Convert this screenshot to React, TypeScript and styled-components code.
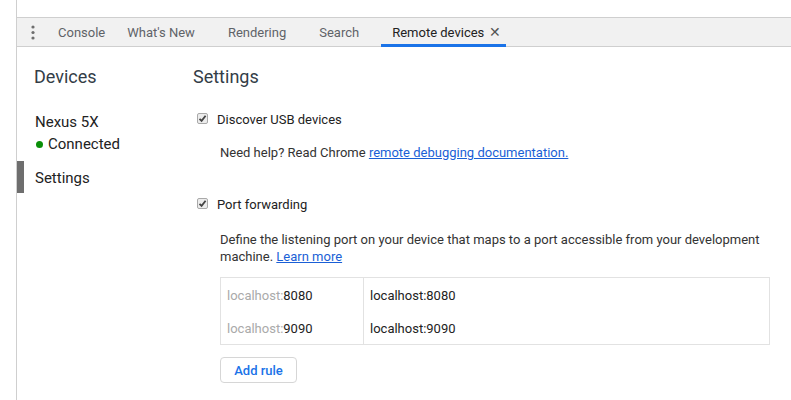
import React from "react";
import styled, { createGlobalStyle } from "styled-components";

const Global = createGlobalStyle`
  html, body { margin: 0; padding: 0; background: #fff; }
  body { font-family: Roboto, "Noto Sans", Arial, sans-serif; color: #333; }
  * { box-sizing: border-box; }
`;

const Page = styled.div`
  padding-left: 16px;
  height: 400px;
  overflow: hidden;
`;

const Frame = styled.div`
  border-left: 1px solid #cfcfcf;
  height: 400px;
  display: flex;
  flex-direction: column;
`;

const TopSpace = styled.div`
  height: 17px;
  flex: none;
`;

const TabBar = styled.div`
  flex: none;
  height: 30px;
  border-top: 1px solid #cfcfcf;
  background: #f1f1f1;
  box-shadow: inset 0 -1px 0 #cfcfcf;
  display: flex;
  align-items: stretch;
  padding-left: 11px;
`;

const MenuButton = styled.div`
  width: 19px;
  display: flex;
  align-items: center;
  justify-content: flex-start;
  padding-left: 3px;
`;

const Tab = styled.div<{ $active?: boolean; $closeable?: boolean }>`
  display: flex;
  align-items: center;
  padding: 0 ${(p) => (p.$closeable ? 7 : 11)}px 0 11px;
  font-size: 13px;
  color: ${(p) => (p.$active ? "#222" : "#5f6368")};
  box-shadow: ${(p) => (p.$active ? "inset 0 -3px 0 #1a73e8" : "none")};
  white-space: nowrap;
  padding-bottom: 1px;
`;

const CloseSlot = styled.span<{ $visible?: boolean }>`
  width: 8px;
  margin-left: 7px;
  font-size: 14px;
  color: #555;
  visibility: ${(p) => (p.$visible ? "visible" : "hidden")};
  display: flex;
  align-items: center;
  justify-content: center;
`;

const Body = styled.div`
  flex: 1;
  display: flex;
`;

const Sidebar = styled.div`
  width: 176px;
  flex: none;
  padding-top: 19px;
`;

const SideTitle = styled.div`
  font-size: 18px;
  color: #333d47;
  padding-left: 17px;
  height: 21px;
  line-height: 21px;
  margin-bottom: 24px;
`;

const DeviceBlock = styled.div`
  padding-left: 18px;
  font-size: 15px;
  color: #222;
  line-height: 22px;
`;

const Status = styled.div`
  display: flex;
  align-items: center;
  margin-left: 1px;
`;

const Dot = styled.span`
  width: 7px;
  height: 7px;
  border-radius: 50%;
  background: #0a8f08;
  margin-right: 5px;
  margin-top: 1px;
`;

const SideItem = styled.div<{ $selected?: boolean }>`
  margin-top: 6px;
  height: 32px;
  display: flex;
  align-items: center;
  font-size: 15px;
  color: #222;
  border-left: 7px solid ${(p) => (p.$selected ? "#6e6e6e" : "transparent")};
  padding-left: 11px;
  padding-top: 1px;
`;

const Main = styled.div`
  flex: 1;
  padding-top: 19px;
  padding-right: 21px;
`;

const Title = styled.div`
  font-size: 18px;
  color: #333d47;
  height: 21px;
  line-height: 21px;
  margin-bottom: 23px;
`;

const CheckRow = styled.label`
  display: flex;
  align-items: center;
  font-size: 13px;
  color: #222;
  height: 18px;
  padding-left: 4px;
`;

const CheckBox = styled.span`
  width: 11px;
  height: 11px;
  border: 1px solid #a9a9a9;
  border-radius: 2px;
  background: #ececec;
  margin-right: 9px;
  display: flex;
  align-items: center;
  justify-content: center;
  margin-top: -2px;
`;

const Help = styled.div<{ $gap: number }>`
  font-size: 13px;
  color: #333;
  padding-left: 27px;
  margin-top: ${(p) => p.$gap}px;
  line-height: 17px;
`;

const Link = styled.a`
  color: #1a5fd6;
  text-decoration: underline;
`;

const Spacer = styled.div<{ $h: number }>`
  height: ${(p) => p.$h}px;
`;

const Table = styled.div`
  margin-left: 27px;
  margin-top: 12px;
  border: 1px solid #e2e2e2;
  display: grid;
  grid-template-columns: 143px 1fr;
`;

const Cell = styled.div<{ $first?: boolean }>`
  height: 33px;
  display: flex;
  align-items: center;
  font-size: 13px;
  color: #222;
  padding-left: 6px;
  padding-top: 2px;
  border-right: ${(p) => (p.$first ? "1px solid #e2e2e2" : "none")};
`;

const Muted = styled.span`
  color: #aaa;
`;

const AddButton = styled.button`
  margin-left: 27px;
  margin-top: 12px;
  width: 77px;
  height: 26px;
  border: 1px solid #d6d6d6;
  border-radius: 4px;
  background: #fff;
  color: #1a73e8;
  font-family: Roboto, Arial, sans-serif;
  font-size: 13px;
  font-weight: 500;
  padding: 0;
`;

const Check = () => (
  <CheckBox>
    <svg width="9" height="9" viewBox="0 0 9 9">
      <path d="M1.5 4.8 L3.6 6.9 L7.6 1.8" fill="none" stroke="#444" strokeWidth="1.8" />
    </svg>
  </CheckBox>
);

export default function App() {
  return (
    <>
      <Global />
      <Page>
        <Frame>
          <TopSpace />
          <TabBar>
            <MenuButton>
              <svg width="4" height="15" viewBox="0 0 4 15">
                <circle cx="2" cy="2" r="1.6" fill="#6e6e6e" />
                <circle cx="2" cy="7.5" r="1.6" fill="#6e6e6e" />
                <circle cx="2" cy="13" r="1.6" fill="#6e6e6e" />
              </svg>
            </MenuButton>
            <Tab>Console</Tab>
            <Tab $closeable>
              What's New<CloseSlot>×</CloseSlot>
            </Tab>
            <Tab $closeable>
              Rendering<CloseSlot>×</CloseSlot>
            </Tab>
            <Tab $closeable>
              Search<CloseSlot>×</CloseSlot>
            </Tab>
            <Tab $closeable $active>
              Remote devices<CloseSlot $visible>✕</CloseSlot>
            </Tab>
          </TabBar>
          <Body>
            <Sidebar>
              <SideTitle>Devices</SideTitle>
              <DeviceBlock>
                <div>Nexus 5X</div>
                <Status>
                  <Dot />
                  Connected
                </Status>
              </DeviceBlock>
              <SideItem $selected>Settings</SideItem>
            </Sidebar>
            <Main>
              <Title>Settings</Title>
              <CheckRow>
                <Check />
                Discover USB devices
              </CheckRow>
              <Help $gap={16}>
                Need help? Read Chrome <Link href="#">remote debugging documentation.</Link>
              </Help>
              <Spacer $h={34} />
              <CheckRow>
                <Check />
                Port forwarding
              </CheckRow>
              <Help $gap={18}>
                Define the listening port on your device that maps to a port accessible from your development
                machine. <Link href="#">Learn more</Link>
              </Help>
              <Table>
                <Cell $first>
                  <Muted>localhost:</Muted>8080
                </Cell>
                <Cell>localhost:8080</Cell>
                <Cell $first>
                  <Muted>localhost:</Muted>9090
                </Cell>
                <Cell>localhost:9090</Cell>
              </Table>
              <AddButton>Add rule</AddButton>
            </Main>
          </Body>
        </Frame>
      </Page>
    </>
  );
}
